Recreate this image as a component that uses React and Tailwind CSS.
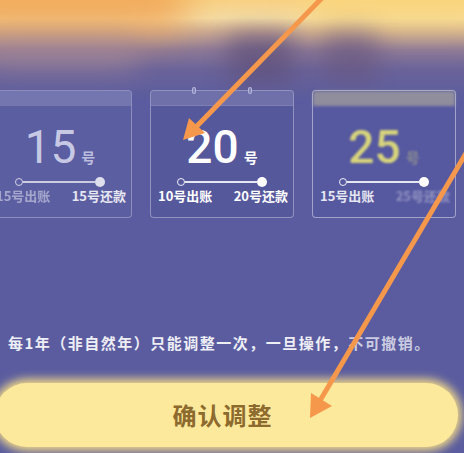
const cjk = "font-['Noto_Sans_CJK_SC','Noto_Sans',sans-serif]";

function Slider({ dim }) {
  return (
    <div className={"flex items-center pl-[26px] mt-[7px] h-[10px] " + (dim || "")}>
      <div className="w-[8px] h-[8px] rounded-full border-[1.5px] border-white/90 shrink-0" />
      <div className="w-[72px] h-[2px] bg-white/85" />
      <div className="w-[10px] h-[10px] rounded-full bg-white shrink-0" />
    </div>
  );
}

function Card({ num, numCls, haoCls, left, right, leftCls, rightCls, band, wrapCls, ringCls, sliderDim }) {
  return (
    <div className={"relative w-[144px] h-[128px] shrink-0 rounded-[4px] border " + wrapCls}>
      <div className={"h-[15px] rounded-t-[3px] " + band} />
      <div className="absolute top-[-4px] left-[0px] right-[0px] flex justify-between px-[41px]">
        <div className={"w-[4px] h-[7px] rounded-full " + ringCls} />
        <div className={"w-[4px] h-[7px] rounded-full " + ringCls} />
      </div>
      <div className="flex items-baseline justify-center mt-[18px] h-[46px]">
        <span className={"font-['Roboto',sans-serif] text-[46px] leading-[46px] " + numCls}>{num}</span>
        <span className={"ml-[5px] text-[14px] leading-[14px] font-bold " + cjk + " " + haoCls}>号</span>
      </div>
      <Slider dim={sliderDim} />
      <div className={"flex justify-between pl-[7px] pr-[5px] mt-[2px] text-[13px] leading-[14px] font-bold " + cjk}>
        <span className={leftCls}>{left}</span>
        <span className={rightCls}>{right}</span>
      </div>
    </div>
  );
}

export default function App() {
  return (
    <div className={"relative w-[464px] h-[453px] overflow-hidden bg-[#5a5c9f] " + cjk}>
      {/* blurred background header */}
      <div className="absolute inset-x-0 top-0 h-[100px] bg-[linear-gradient(180deg,#f8d083_0%,#f4dba2_18%,#c9a892_32%,#8c7896_50%,#6a6399_70%,#5a5c9f_100%)]" />
      <div className="absolute left-[-60px] top-[-25px] w-[250px] h-[55px] rounded-full bg-[#f0a050] blur-[18px] opacity-80" />
      <div className="absolute left-[300px] top-[-20px] w-[200px] h-[45px] rounded-full bg-[#fad77c] blur-[16px] opacity-80" />
      <div className="absolute left-[228px] top-[34px] w-[66px] h-[50px] rounded-[10px] bg-[#5f5079] blur-[12px] opacity-70" />
      <div className="absolute left-[322px] top-[32px] w-[56px] h-[50px] rounded-[10px] bg-[#67557d] blur-[12px] opacity-60" />
      <div className="absolute left-[-20px] top-[40px] w-[160px] h-[30px] rounded-full bg-[#a88a98] blur-[14px] opacity-60" />

      <div className="relative flex flex-col pt-[90px]">
        <div className="flex gap-[18px] ml-[-12px]">
          <Card
            num="15"
            numCls="text-[#d6d8ee]/90"
            haoCls="text-[#d6d8ee]/80"
            left="15号出账"
            right="15号还款"
            leftCls="text-white/45 blur-[0.6px]"
            rightCls="text-white/85"
            band="bg-white/15"
            wrapCls="border-white/30 bg-[#5c5ea2]"
            ringCls="bg-transparent"
            sliderDim="opacity-80"
          />
          <Card
            num="20"
            numCls="text-white font-medium"
            haoCls="text-white"
            left="10号出账"
            right="20号还款"
            leftCls="text-white"
            rightCls="text-white"
            band="bg-white/15 border-b border-white/10"
            wrapCls="border-white/35 bg-[#56589c]"
            ringCls="bg-[#8486bd] border border-white/40"
          />
          <Card
            num="25"
            numCls="text-[#d7d47c] font-medium blur-[0.8px]"
            haoCls="text-[#d7d47c]/40 blur-[1px]"
            left="15号出账"
            right="25号还款"
            leftCls="text-white/85"
            rightCls="text-white/35 blur-[0.8px]"
            band="bg-[#c9c39a]/50 blur-[1.5px]"
            wrapCls="border-white/45 bg-[#5658a0]"
            ringCls="bg-transparent"
          />
        </div>

        <p className="mt-[115px] ml-[8px] text-[15px] leading-[20px] tracking-[1.5px] font-bold text-white/90 whitespace-nowrap">
          每1年（非自然年）只能调整一次，一旦操作，<span className="text-white/70">不可撤销。</span>
        </p>

        <button className="mt-[30px] ml-[-5px] w-[463px] h-[64px] rounded-full bg-[#fce99b] shadow-[0_0_10px_4px_#f3db88] flex items-center justify-center pr-[8px]">
          <span className="text-[24px] leading-[30px] tracking-[1px] font-bold text-[#8d6a2d]">确认调整</span>
        </button>
      </div>

      {/* annotation arrows */}
      <svg className="absolute inset-0 pointer-events-none" width="464" height="453" viewBox="0 0 464 453">
        <line x1="323" y1="-3" x2="197" y2="126" stroke="#f5984c" strokeWidth="5" strokeLinecap="round" />
        <polygon points="183,140 189,118 205,133" fill="#f5984c" />
        <line x1="472" y1="143" x2="321" y2="399" stroke="#f5984c" strokeWidth="5" strokeLinecap="round" />
        <polygon points="310,418 311,393 332,406" fill="#f5984c" />
      </svg>
    </div>
  );
}
